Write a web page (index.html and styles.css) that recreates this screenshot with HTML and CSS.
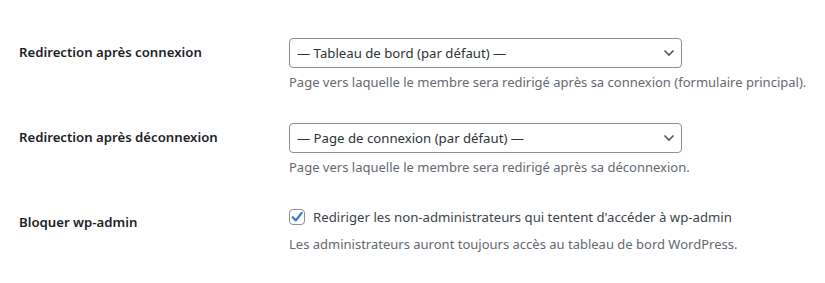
FILE: index.html
```html
<!DOCTYPE html>
<html lang="fr">
<head>
    <meta charset="UTF-8">
    <meta name="viewport" content="width=device-width, initial-scale=1.0">
    <title>Réglages de redirection</title>
    <link rel="stylesheet" href="styles.css">
</head>
<body>
    <div class="form-table">
        <div class="row">
            <div class="label">Redirection après connexion</div>
            <div class="field">
                <div class="select-wrap">
                    <select class="select">
                        <option>— Tableau de bord (par défaut) —</option>
                    </select>
                    <svg class="chevron" width="12" height="8" viewBox="0 0 12 8"><path d="M1.5 1.5 L6 6 L10.5 1.5" fill="none" stroke="#50575e" stroke-width="1.6"/></svg>
                </div>
                <p class="description">Page vers laquelle le membre sera redirigé après sa connexion (formulaire principal).</p>
            </div>
        </div>

        <div class="row">
            <div class="label">Redirection après déconnexion</div>
            <div class="field">
                <div class="select-wrap">
                    <select class="select">
                        <option>— Page de connexion (par défaut) —</option>
                    </select>
                    <svg class="chevron" width="12" height="8" viewBox="0 0 12 8"><path d="M1.5 1.5 L6 6 L10.5 1.5" fill="none" stroke="#50575e" stroke-width="1.6"/></svg>
                </div>
                <p class="description">Page vers laquelle le membre sera redirigé après sa déconnexion.</p>
            </div>
        </div>

        <div class="row">
            <div class="label">Bloquer wp-admin</div>
            <div class="field">
                <label class="check">
                    <span class="checkbox">
                        <svg width="14" height="14" viewBox="0 0 14 14"><path d="M2.6 7.2 L5.8 10.4 L11.6 3" fill="none" stroke="#3582c4" stroke-width="2.3" stroke-linecap="round" stroke-linejoin="round"/></svg>
                    </span>
                    Rediriger les non-administrateurs qui tentent d'accéder à wp-admin
                </label>
                <p class="description">Les administrateurs auront toujours accès au tableau de bord WordPress.</p>
            </div>
        </div>
    </div>
</body>
</html>
```

FILE: styles.css
```css
body {
    margin: 0;
    background-color: #FFFFFF;
    font-family: "Noto Sans", "Open Sans", sans-serif;
    font-size: 13px;
    color: #3c434a;
}
.form-table {
    padding: 23px 0 0 19px;
}
.row {
    display: grid;
    grid-template-columns: 270px 1fr;
    height: 85px;
}
.label {
    padding-top: 20px;
    font-size: 13.2px;
    line-height: 18px;
    font-weight: 600;
    color: #1d2327;
}
.field {
    padding-top: 15px;
}
.select-wrap {
    position: relative;
    width: 393px;
}
.select {
    appearance: none;
    width: 100%;
    height: 30px;
    padding: 0 24px 0 7px;
    border: 1px solid #8c8f94;
    border-radius: 4px;
    background-color: #FFFFFF;
    font-family: inherit;
    font-size: 13.2px;
    color: #2c3338;
}
.chevron {
    position: absolute;
    right: 7px;
    top: 11px;
}
.description {
    margin: 5px 0 0;
    line-height: 1.5;
    color: #646970;
}
.check {
    display: flex;
    align-items: center;
    gap: 8px;
    height: 18px;
    font-size: 13.2px;
    color: #3c434a;
}
.checkbox {
    display: flex;
    align-items: center;
    justify-content: center;
    width: 14px;
    height: 14px;
    border: 1px solid #8c8f94;
    border-radius: 4px;
}
.check + .description {
    margin-top: 9px;
}
```
